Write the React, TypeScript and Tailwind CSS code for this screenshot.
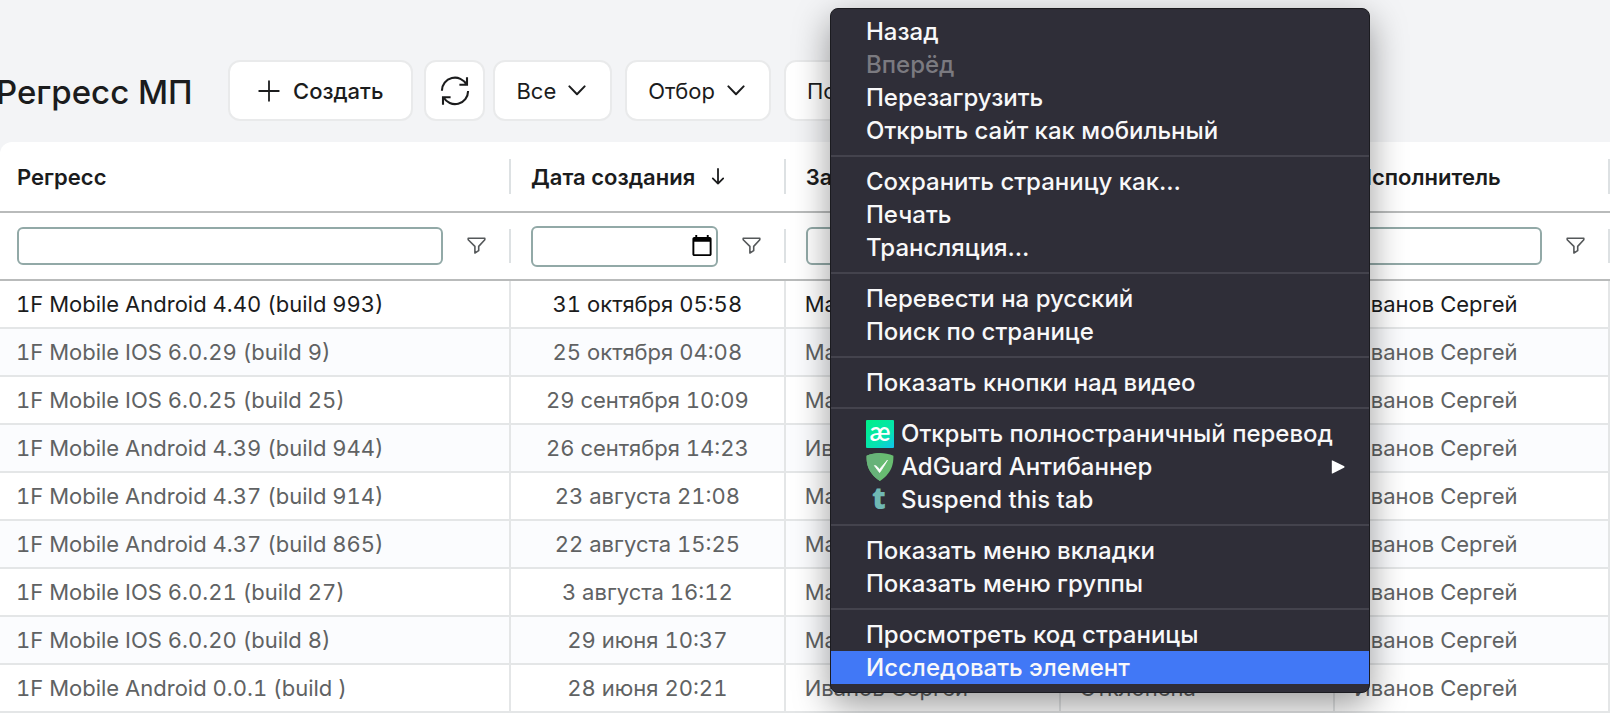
import React from 'react'

interface Row {
  name: string
  date: string
  author: string
  status: string
}

interface MenuEntry {
  label: string
  icon?: React.ReactNode
  disabled?: boolean
  active?: boolean
  submenu?: boolean
}

const rows: Row[] = [
  { name: '1F Mobile Android 4.40 (build 993)', date: '31 октября 05:58', author: 'Макаров Денис', status: 'В работе' },
  { name: '1F Mobile IOS 6.0.29 (build 9)', date: '25 октября 04:08', author: 'Макаров Денис', status: 'Выполнена' },
  { name: '1F Mobile IOS 6.0.25 (build 25)', date: '29 сентября 10:09', author: 'Макаров Денис', status: 'Выполнена' },
  { name: '1F Mobile Android 4.39 (build 944)', date: '26 сентября 14:23', author: 'Иванов Сергей', status: 'Выполнена' },
  { name: '1F Mobile Android 4.37 (build 914)', date: '23 августа 21:08', author: 'Макаров Денис', status: 'Выполнена' },
  { name: '1F Mobile Android 4.37 (build 865)', date: '22 августа 15:25', author: 'Макаров Денис', status: 'Выполнена' },
  { name: '1F Mobile IOS 6.0.21 (build 27)', date: '3 августа 16:12', author: 'Макаров Денис', status: 'Выполнена' },
  { name: '1F Mobile IOS 6.0.20 (build 8)', date: '29 июня 10:37', author: 'Макаров Денис', status: 'Выполнена' },
  { name: '1F Mobile Android 0.0.1 (build )', date: '28 июня 20:21', author: 'Иванов Сергей', status: 'Отклонена' },
]

const columns = [
  { title: 'Регресс', type: 'text' },
  { title: 'Дата создания', type: 'date', sorted: true },
  { title: 'Заказчик', type: 'text' },
  { title: 'Статус', type: 'text' },
  { title: 'Исполнитель', type: 'text' },
]

function PlusIcon() {
  return (
    <svg width="22" height="22" viewBox="0 0 22 22" fill="none" stroke="currentColor" strokeWidth="1.8" strokeLinecap="round">
      <path d="M11 1.2v19.6M1.2 11h19.6" />
    </svg>
  )
}

function RefreshIcon() {
  return (
    <svg width="30" height="30" viewBox="0 0 30 30" fill="none" stroke="currentColor" strokeWidth="2.1">
      <path d="M1.9 14.8A13.1 13.1 0 0 1 26.6 8.700" />
      <path d="M27 1.2v7.6h-7.6" />
      <path d="M28.1 15A13.1 13.1 0 0 1 3.500 21.300" />
      <path d="M3 28.800v-7.600h7.600" />
    </svg>
  )
}

function ChevronIcon() {
  return (
    <svg width="18" height="11" viewBox="0 0 18 11" fill="none" stroke="currentColor" strokeWidth="2" strokeLinecap="round" strokeLinejoin="round">
      <path d="M1.4 1.4 9 9.2l7.6-7.8" />
    </svg>
  )
}

function SortIcon() {
  return (
    <svg width="14" height="17" viewBox="0 0 14 17" fill="none" stroke="currentColor" strokeWidth="1.8" strokeLinecap="round" strokeLinejoin="round">
      <path d="M7 1v14.6M1.8 10.4 7 15.6l5.2-5.2" />
    </svg>
  )
}

function FilterIcon() {
  return (
    <svg width="19" height="19" viewBox="0 0 19 19" fill="none" stroke="#55585a" strokeWidth="1.6" strokeLinejoin="round">
      <path d="M1.200 1.200h16.6v1.6L11.700 9.400v4.200l-3.800 2.400V9.400L1.200 2.800z" />
    </svg>
  )
}

function TranslateIcon() {
  return (
    <svg width="28" height="28" viewBox="0 0 28 28">
      <defs>
        <linearGradient id="ae" x1="0.2" y1="0" x2="1" y2="1">
          <stop offset="0" stopColor="#00ee8c" />
          <stop offset="0.6" stopColor="#06e3b0" />
          <stop offset="1" stopColor="#10c3ee" />
        </linearGradient>
      </defs>
      <rect width="28" height="28" rx="1" fill="url(#ae)" />
      <text x="14" y="20.500" textAnchor="middle" fontSize="26" fontWeight="600" fill="#fff" fontFamily="Lato, sans-serif">æ</text>
    </svg>
  )
}

function ShieldIcon() {
  return (
    <svg width="28" height="28" viewBox="0 0 28 28">
      <path d="M14 0C9.600 0 4.600.8.600 2.800c0 4.600-.6 16.200 13.400 25.200 14-9 13.400-20.600 13.400-25.200C23.400.8 18.400 0 14 0z" fill="#68bc71" />
      <path d="M14 0C9.600 0 4.600.8.600 2.800c0 4.600-.6 16.200 13.400 25.200z" fill="#67b279" />
      <path d="M8.400 12.600c1.800-.2 3 1.200 5 4l8-9.400c-3 5.200-5.400 9-7.800 12.400z" fill="#fff" stroke="#fff" strokeWidth="0.8" />
    </svg>
  )
}

function SuspendIcon() {
  return (
    <svg width="28" height="28" viewBox="0 0 28 28">
      <text x="13" y="23" textAnchor="middle" fontSize="30" fontWeight="800" fill="#70b8b4" fontFamily="'Open Sans', 'Noto Sans', sans-serif">t</text>
    </svg>
  )
}

const menuGroups: MenuEntry[][] = [
  [
    { label: 'Назад' },
    { label: 'Вперёд', disabled: true },
    { label: 'Перезагрузить' },
    { label: 'Открыть сайт как мобильный' },
  ],
  [{ label: 'Сохранить страницу как…' }, { label: 'Печать' }, { label: 'Трансляция…' }],
  [{ label: 'Перевести на русский' }, { label: 'Поиск по странице' }],
  [{ label: 'Показать кнопки над видео' }],
  [
    { label: 'Открыть полностраничный перевод', icon: <TranslateIcon /> },
    { label: 'AdGuard Антибаннер', icon: <ShieldIcon />, submenu: true },
    { label: 'Suspend this tab', icon: <SuspendIcon /> },
  ],
  [{ label: 'Показать меню вкладки' }, { label: 'Показать меню группы' }],
  [{ label: 'Просмотреть код страницы' }, { label: 'Исследовать элемент', active: true }],
]

const toolButton =
  'flex h-[61px] shrink-0 items-center rounded-xl border-2 border-[#e9eaeb] bg-white'

function Toolbar() {
  return (
    <header className="flex h-[142px] items-center pt-[39px]">
      <h1 className="-ml-1 w-[232px] shrink-0 whitespace-nowrap pt-0.5 text-[33px] font-medium">Регресс МП</h1>
      <div className="flex items-center gap-[11px]">
        <button className={`${toolButton} gap-[13px] px-7 font-medium`}>
          <PlusIcon />
          Создать
        </button>
        <button className={`${toolButton} w-[61px] justify-center`} aria-label="Обновить">
          <RefreshIcon />
        </button>
      </div>
      <div className="ml-2 flex items-center gap-[13px]">
        {['Все', 'Отбор', 'Показать'].map((label) => (
          <button key={label} className={`${toolButton} gap-3 pr-6 pl-[21px]`}>
            {label}
            <ChevronIcon />
          </button>
        ))}
      </div>
    </header>
  )
}

function RegressTable() {
  return (
    <table className="w-full table-fixed border-separate border-spacing-0 overflow-hidden rounded-tl-xl bg-white">
      <thead>
        <tr className="h-[71px]">
          {columns.map((col, i) => (
            <th
              key={col.title}
              className={`border-b-2 border-[#b9bbbb] p-0 text-left font-semibold ${
                i === 0 ? 'w-[511px] pl-[17px]' : 'pl-5'
              }`}
            >
              <div className="flex h-[35px] items-center gap-4 border-r-2 border-[#dde1e3] whitespace-nowrap">
                {col.title}
                {col.sorted && <SortIcon />}
              </div>
            </th>
          ))}
        </tr>
        <tr className="h-[68px]">
          {columns.map((col, i) => (
            <td
              key={col.title}
              className={`border-b-2 border-[#b9bbbb] p-0 ${i === 0 ? 'pl-[17px]' : 'pl-5'}`}
            >
              <div className="flex h-[34px] items-center border-r-2 border-[#dde1e3] pr-[23px]">
                <input
                  type={col.type}
                  aria-label={col.title}
                  className={`min-w-0 flex-1 rounded-md border-2 border-[#92a9a7] bg-white ${
                    col.type === 'date' ? 'h-[41px] text-[24px] text-transparent' : 'h-[38px] px-1'
                  }`}
                />
                <button className="ml-6 shrink-0" aria-label={`Фильтр: ${col.title}`}>
                  <FilterIcon />
                </button>
              </div>
            </td>
          ))}
        </tr>
      </thead>
      <tbody className="tabular-nums">
        {rows.map((row, i) => (
          <tr
            key={row.name}
            className={`h-12 whitespace-nowrap [&>td]:border-r-2 [&>td]:border-b-2 [&>td]:border-[#e4e6e7] [&>td]:py-0 ${
              i === 0 ? 'text-[#1b1c1d]' : 'text-[#606263]'
            } ${i % 2 ? 'bg-[#fbfcfe]' : 'bg-white'}`}
          >
            <td className="pl-4">{row.name}</td>
            <td className="text-center">{row.date}</td>
            <td className="pl-[19px]">{row.author}</td>
            <td className="pl-[19px]">{row.status}</td>
            <td className="pl-[19px]">Иванов Сергей</td>
          </tr>
        ))}
      </tbody>
    </table>
  )
}

function ContextMenu() {
  return (
    <div
      role="menu"
      className="absolute top-2 left-[830px] w-[540px] rounded-lg border border-[#1b1b20] bg-[#2f2e38] pt-[6px] pb-2 text-[24px] font-medium text-[#f8f8f9] shadow-[0_12px_36px_rgba(0,0,0,0.4)]"
    >
      {menuGroups.map((group, i) => (
        <div key={group[0].label}>
          {i > 0 && <div role="separator" className="my-2 h-[2px] bg-[#44434d]" />}
          {group.map((item) => (
            <button
              key={item.label}
              role="menuitem"
              disabled={item.disabled}
              className={`flex h-[33px] w-full items-center gap-[7px] pr-6 pl-[35px] whitespace-nowrap ${
                item.active ? 'bg-[#4178f6]' : ''
              } ${item.disabled ? 'text-[#7b7a80]' : ''}`}
            >
              {item.icon}
              {item.label}
              {item.submenu && (
                <svg className="ml-auto" width="14" height="14" viewBox="0 0 14 14" fill="#fff">
                  <path d="M.8.4h.8L13.400 6.200v1.200L1.600 13.600H.8z" />
                </svg>
              )}
            </button>
          ))}
        </div>
      ))}
    </div>
  )
}

export default function App() {
  return (
    <div className="relative min-h-screen overflow-hidden bg-[#f3f4f6] font-['Inter','Noto_Sans',sans-serif] text-[22px] leading-7 text-[#1b1c1d]">
      <Toolbar />
      <RegressTable />
      <ContextMenu />
    </div>
  )
}
